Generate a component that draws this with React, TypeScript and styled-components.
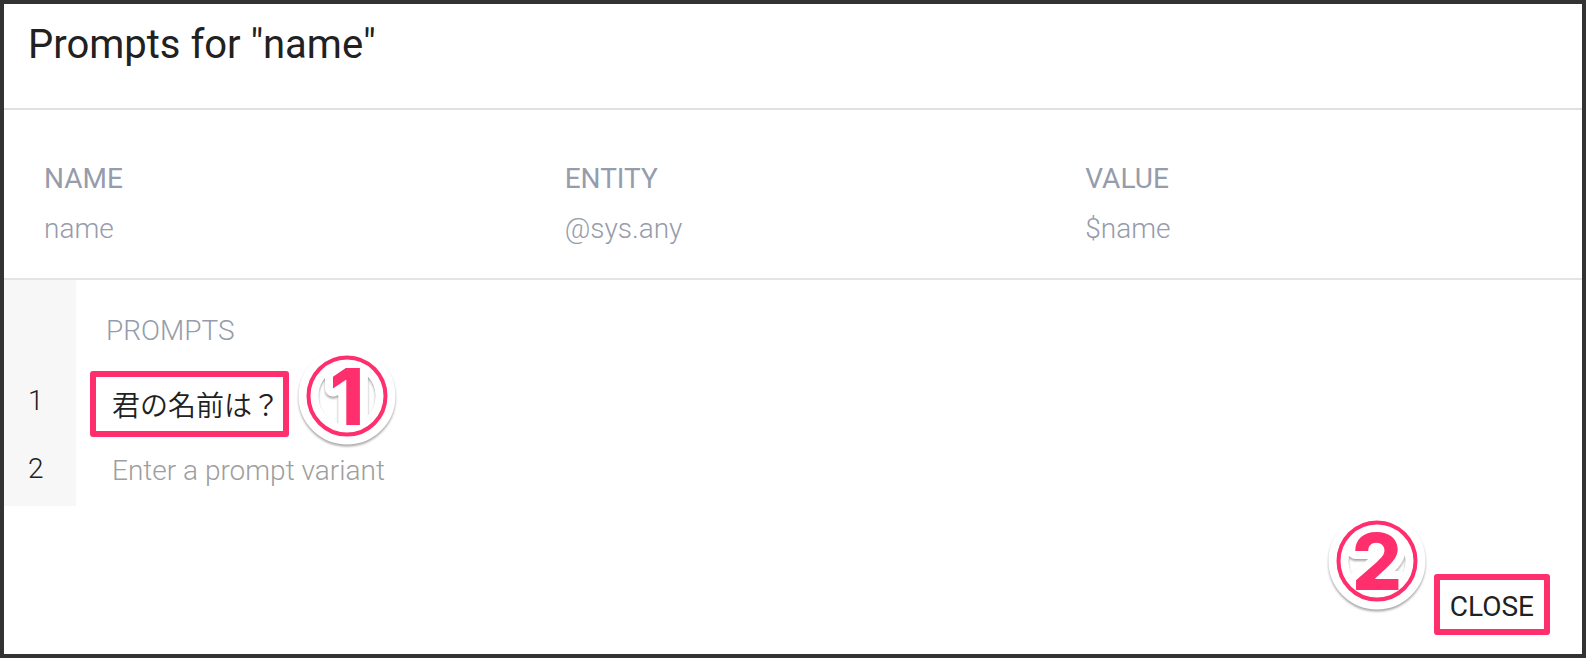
import React, { useState } from "react";
import styled, { createGlobalStyle } from "styled-components";

const PINK = "#ff2f6e";

const GlobalStyle = createGlobalStyle`
  *, *::before, *::after { box-sizing: border-box; }
  body {
    margin: 0;
    background: #fff;
    font-family: Roboto, "Noto Sans CJK JP", sans-serif;
    font-size: 28px;
    line-height: 32px;
    color: #212121;
  }
`;

const Dialog = styled.main`
  display: flex;
  flex-direction: column;
  min-height: 100vh;
  border: 4px solid #333;
  background: #fff;
`;

const Header = styled.header`
  padding: 17px 24px 39px;
  border-bottom: 2px solid #e0e0e0;
`;

const Title = styled.h1`
  margin: 0;
  font-size: 40px;
  line-height: 48px;
  font-weight: 400;
`;

const Summary = styled.section`
  padding: 49px 8px 31px;
  border-bottom: 2px solid #e4e4e4;
`;

const SummaryTable = styled.table`
  width: 100%;
  table-layout: fixed;
  border-collapse: collapse;
  text-align: left;
  color: #959cab;
`;

const HeadCell = styled.th`
  padding: 4px 32px 8px;
  font-weight: 400;
`;

const Cell = styled.td`
  padding: 10px 32px 2px;
  font-weight: 300;
`;

const Prompts = styled.section`
  display: grid;
  grid-template-columns: 72px 1fr;
`;

const Gutter = styled.div`
  display: flex;
  flex-direction: column;
  padding: 87px 0 3px 24px;
  background: #f7f7f7;
  font-weight: 300;
`;

const LineNumber = styled.label`
  height: 68px;
  line-height: 68px;
`;

const PromptList = styled.div`
  display: flex;
  flex-direction: column;
  padding-left: 30px;
`;

const PromptsTitle = styled.h2`
  margin: 0;
  padding: 35px 0 20px;
  font-size: 28px;
  line-height: 32px;
  font-weight: 300;
  color: #959cab;
`;

const PromptRow = styled.div`
  position: relative;
  display: flex;
  height: 68px;
`;

const PromptInput = styled.input`
  flex: 1;
  min-width: 0;
  border: 0;
  outline: 0;
  padding: 4px 6px 0;
  background: transparent;
  color: inherit;
  font: inherit;
  font-weight: 300;

  &::placeholder {
    color: #9e9e9e;
    opacity: 1;
  }

  &:lang(ja) {
    padding-top: 12px;
    font-weight: 350;
  }
`;

const Highlight = styled.span`
  position: absolute;
  top: 4px;
  left: -16px;
  width: 199px;
  height: 66px;
  border: 6px solid ${PINK};
  border-radius: 3px;
  pointer-events: none;
`;

const Footer = styled.footer`
  display: flex;
  justify-content: flex-end;
  margin-top: auto;
  padding: 20px 32px 19px;
`;

const CloseArea = styled.div`
  position: relative;
`;

const CloseButton = styled.button`
  display: block;
  border: 6px solid ${PINK};
  border-radius: 3px;
  padding: 11px 10px 6px;
  background: transparent;
  color: inherit;
  font: inherit;
  line-height: 32px;
  cursor: pointer;
`;

const BadgeSvg = styled.svg<{ $top: number; $left: number }>`
  position: absolute;
  top: ${(p) => p.$top}px;
  left: ${(p) => p.$left}px;
  width: 112px;
  height: 112px;
  pointer-events: none;
  font-family: Inter, sans-serif;
  font-size: 79px;
  font-weight: 800;
`;

const Halo = styled.g`
  fill: #fff;
  stroke: #fff;
  stroke-linejoin: round;
  filter: drop-shadow(0 2px 1px rgba(0, 0, 0, 0.35));
`;

/* Numbered callout: pink ring and digit, both with a white outline that casts a shadow. */
function StepBadge({ step, top, left }: { step: number; top: number; left: number }) {
  return (
    <BadgeSvg $top={top} $left={left} viewBox="0 0 112 112" aria-label={`Step ${step}`}>
      <Halo aria-hidden="true">
        <circle cx="56" cy="56" r="38.5" fill="none" strokeWidth="20" />
        <text x="56" y="85" textAnchor="middle" strokeWidth="16">{step}</text>
      </Halo>
      <circle cx="56" cy="56" r="38.5" fill="none" stroke={PINK} strokeWidth="4" />
      <text x="56" y="85" textAnchor="middle" fill={PINK}>{step}</text>
    </BadgeSvg>
  );
}

export default function App() {
  const [first, setFirst] = useState("君の名前は？");
  const [second, setSecond] = useState("");

  return (
    <>
      <GlobalStyle />
      <Dialog>
        <Header>
          <Title>Prompts for "name"</Title>
        </Header>
        <Summary>
          <SummaryTable>
            <thead>
              <tr>
                <HeadCell scope="col">NAME</HeadCell>
                <HeadCell scope="col">ENTITY</HeadCell>
                <HeadCell scope="col">VALUE</HeadCell>
              </tr>
            </thead>
            <tbody>
              <tr>
                <Cell>name</Cell>
                <Cell>@sys.any</Cell>
                <Cell>$name</Cell>
              </tr>
            </tbody>
          </SummaryTable>
        </Summary>
        <Prompts>
          <Gutter>
            <LineNumber htmlFor="prompt-1">1</LineNumber>
            <LineNumber htmlFor="prompt-2">2</LineNumber>
          </Gutter>
          <PromptList>
            <PromptsTitle>PROMPTS</PromptsTitle>
            <PromptRow>
              <PromptInput id="prompt-1" lang="ja" value={first} onChange={(e) => setFirst(e.target.value)} />
              <Highlight />
              <StepBadge step={1} top={-27} left={185} />
            </PromptRow>
            <PromptRow>
              <PromptInput
                id="prompt-2"
                placeholder="Enter a prompt variant"
                value={second}
                onChange={(e) => setSecond(e.target.value)}
              />
            </PromptRow>
          </PromptList>
        </Prompts>
        <Footer>
          <CloseArea>
            <CloseButton type="button">CLOSE</CloseButton>
            <StepBadge step={2} top={-69} left={-113} />
          </CloseArea>
        </Footer>
      </Dialog>
    </>
  );
}
